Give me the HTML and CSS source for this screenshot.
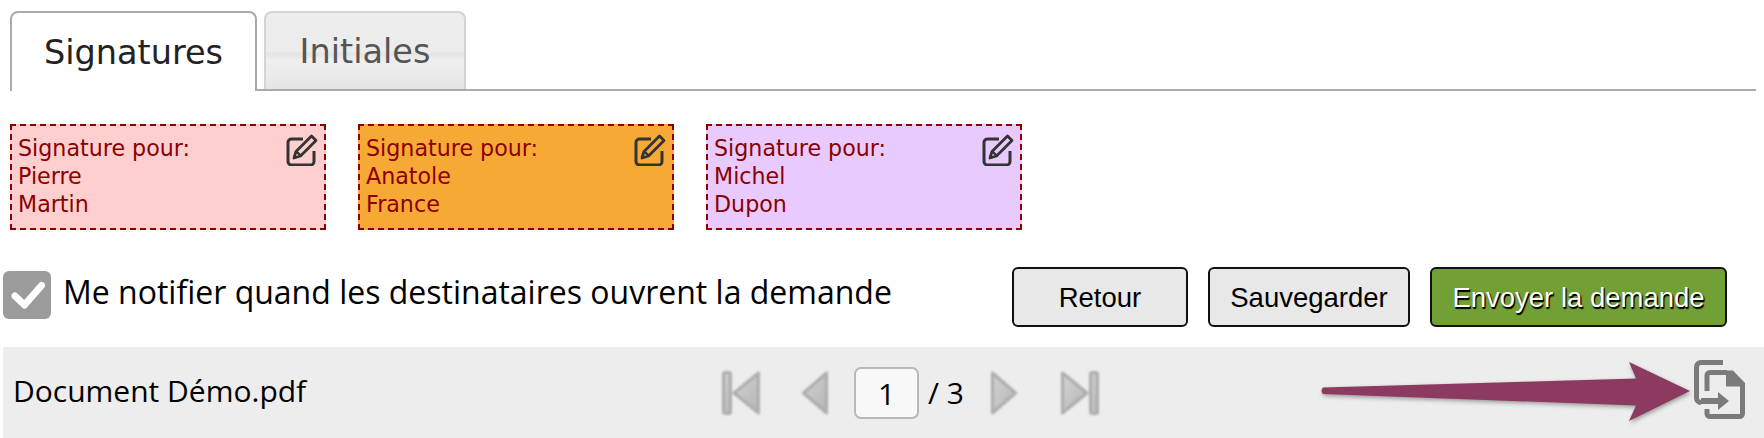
FILE: index.html
```html
<!DOCTYPE html>
<html lang="fr">
<head>
<meta charset="utf-8">
<title>Signatures</title>
<link rel="stylesheet" href="styles.css">
</head>
<body>
<svg class="defs" width="0" height="0" aria-hidden="true">
  <defs>
    <linearGradient id="navfill" x1="0" y1="0" x2="1" y2="1">
      <stop offset="0" stop-color="#d4d4d4"/>
      <stop offset="1" stop-color="#b4b4b4"/>
    </linearGradient>
    <symbol id="edit" viewBox="0 0 32 32">
      <path d="M17 5H5.500A3.500 3.500 0 0 0 2 8.500v19A3.500 3.500 0 0 0 5.500 31h19a3.500 3.500 0 0 0 3.500-3.500V17" fill="none" stroke="currentColor" stroke-width="3"/>
      <path d="M25.500 2 30 6.500 14.500 22 8 24l2-6.500z" fill="none" stroke="currentColor" stroke-width="2.800" stroke-linejoin="round"/>
      <path d="M11 18l4 4" stroke="currentColor" stroke-width="2.400"/>
    </symbol>
  </defs>
</svg>
<main class="page">
  <nav class="tabs">
    <a class="tab tab-active">Signatures</a>
    <a class="tab tab-idle">Initiales</a>
  </nav>

  <section class="cards">
    <article class="card card-pink">
      <p class="card-text">Signature pour:<br>Pierre<br>Martin</p>
      <svg class="edit-icon"><use href="#edit"/></svg>
    </article>
    <article class="card card-orange">
      <p class="card-text">Signature pour:<br>Anatole<br>France</p>
      <svg class="edit-icon"><use href="#edit"/></svg>
    </article>
    <article class="card card-violet">
      <p class="card-text">Signature pour:<br>Michel<br>Dupon</p>
      <svg class="edit-icon"><use href="#edit"/></svg>
    </article>
  </section>

  <section class="actions">
    <label class="notify">
      <svg class="check" viewBox="0 0 48 48" aria-hidden="true">
        <rect width="48" height="48" rx="6" fill="#9b9b9b"/>
        <path d="M12 25l9.500 9L38.500 14.500" fill="none" stroke="#fff" stroke-width="7" stroke-linecap="round" stroke-linejoin="round"/>
      </svg>
      <span>Me notifier quand les destinataires ouvrent la demande</span>
    </label>
    <div class="buttons">
      <button class="btn btn-back">Retour</button>
      <button class="btn btn-save">Sauvegarder</button>
      <button class="btn btn-send">Envoyer la demande</button>
    </div>
  </section>

  <section class="toolbar">
    <div class="filename">Document Démo.pdf</div>
    <div class="pager">
      <svg class="nav nav-first" viewBox="0 0 38 44" aria-hidden="true">
        <rect x="1.500" y="1.500" width="7" height="41" rx="2"/>
        <path d="M36.500 2V42L12 22z"/>
      </svg>
      <svg class="nav nav-prev" viewBox="0 0 26 44" aria-hidden="true">
        <path d="M24.500 2V42L1.500 22z"/>
      </svg>
      <div class="page-input">1</div>
      <span class="page-total">/ 3</span>
      <svg class="nav nav-next" viewBox="0 0 26 44" aria-hidden="true">
        <path d="M1.500 2V42L24.500 22z"/>
      </svg>
      <svg class="nav nav-last" viewBox="0 0 38 44" aria-hidden="true">
        <path d="M1.500 2V42L26 22z"/>
        <rect x="29.500" y="1.500" width="7" height="41" rx="2"/>
      </svg>
    </div>
    <svg class="copy" viewBox="0 0 51 59" aria-hidden="true">
      <path d="M29 2.500H7A4.500 4.500 0 0 0 2.500 7v31A4.500 4.500 0 0 0 7 42.500" fill="none" stroke="#7b7b7b" stroke-width="5"/>
      <path d="M13 31V15.500a3 3 0 0 1 3-3H33M48.500 25V53.500a3 3 0 0 1-3 3H16a3 3 0 0 1-3-3V49" fill="none" stroke="#7b7b7b" stroke-width="5"/>
      <path d="M32 10.500h7L51 23v3.500H32z" fill="#7b7b7b"/>
      <path d="M7 38h17v-6l11 9-11 9v-6H7z" fill="#7b7b7b"/>
    </svg>
    <svg class="pointer" viewBox="0 0 372 62" aria-hidden="true">
      <path d="M3 26.500 316 17.500 309 1 370 30 309 60 316 44.500 3 33Q0 29.500 3 26.500z" fill="#8c3a5f"/>
    </svg>
  </section>
</main>
</body>
</html>
```
FILE: styles.css
```css
* { box-sizing: border-box; }

html, body {
  margin: 0;
  background: #fff;
}

.defs { position: absolute; }

.page {
  width: 1764px;
  height: 438px;
  overflow: hidden;
}

/* Tabs */
.tabs {
  display: flex;
  gap: 7px;
  align-items: flex-end;
  height: 91px;
  margin: 0 8px 0 10px;
  padding-top: 11px;
  border-bottom: 2px solid #aaa;
}

.tab {
  display: flex;
  align-items: center;
  justify-content: center;
  height: 80px;
  border: 2px solid #aaa;
  border-bottom: 0;
  border-radius: 8px 8px 0 0;
  font-family: "DejaVu Sans", sans-serif;
  font-size: 33.500px;
}

.tab-active {
  width: 247px;
  margin-bottom: -2px;
  background: #fff;
  color: #222;
}

.tab-idle {
  width: 202px;
  height: 78px;
  border-color: #d4d4d4;
  background: linear-gradient(#ededed 0, #ececec 50%, #e4e4e4 54%, #efefef 62%, #ececec 80%, #e4e4e4 100%);
  color: #555;
}

/* Signature cards */
.cards {
  display: flex;
  gap: 32px;
  margin: 33px 0 0 10px;
}

.card {
  display: flex;
  justify-content: space-between;
  width: 316px;
  height: 106px;
  padding: 8px 6px 0 6px;
  border: 2px dashed #8b0000;
  color: #8b0000;
  font-family: "DejaVu Sans", sans-serif;
  font-size: 22.200px;
  line-height: 28px;
}

.card-text { margin: 0; }
.card-pink { background: #ffcfcf; }
.card-orange { background: #f7a935; }
.card-violet { background: #e8caff; }

.edit-icon {
  width: 32px;
  height: 32px;
  color: #333;
  filter: blur(.6px);
}

/* Notification row */
.actions {
  display: flex;
  justify-content: space-between;
  align-items: flex-start;
  height: 80px;
  margin-top: 37px;
  padding: 0 37px 0 3px;
}

.notify {
  display: flex;
  align-items: center;
  gap: 12px;
  margin-top: 4px;
  color: #000;
  font-family: "Open Sans", sans-serif;
  font-size: 32px;
}

.notify span { position: relative; top: -4px; }

.check { width: 48px; height: 48px; }

.buttons {
  display: flex;
  gap: 20px;
}

.btn {
  height: 60px;
  padding: 2px 0 0;
  border: 2px solid #111;
  border-radius: 6px;
  background: #e8e8e8;
  color: #000;
  font-family: "Liberation Sans", sans-serif;
  font-size: 27.500px;
}

.btn-back { width: 176px; }
.btn-save { width: 202px; }

.btn-send {
  width: 297px;
  background: #72a034;
  color: #fff;
  text-shadow: 1px 1px 1px #000, 1px 2px 1px #000;
}

/* Viewer toolbar */
.toolbar {
  position: relative;
  display: flex;
  align-items: center;
  height: 91px;
  margin-left: 3px;
  padding-left: 10px;
  background: #ededed;
}

.filename {
  width: 709px;
  margin-top: -4px;
  color: #000;
  font-family: "Open Sans", sans-serif;
  font-size: 30px;
}

.pager {
  display: flex;
  align-items: center;
}

.nav {
  height: 44px;
  flex: none;
  fill: url(#navfill);
  stroke: #adadad;
  stroke-width: 3;
  stroke-linejoin: round;
  filter: blur(.8px);
}

.nav-first { width: 38px; margin-right: 42px; }
.nav-prev { width: 26px; margin-right: 26px; }
.nav-next { width: 26px; margin: 0 44px 0 27px; }
.nav-last { width: 38px; }

.page-input {
  width: 65px;
  height: 52px;
  border: 2px solid #b8b8b8;
  border-radius: 7px;
  background: #f8f8f8;
  color: #000;
  font-family: "Open Sans", sans-serif;
  font-size: 30px;
  line-height: 50px;
  text-align: center;
}

.page-total {
  margin-left: 9px;
  color: #000;
  font-family: "Open Sans", sans-serif;
  font-size: 30px;
}

.copy {
  width: 51px;
  height: 59px;
  margin-left: auto;
  margin-right: 19px;
  margin-top: -7px;
}

.pointer {
  position: absolute;
  left: 1317px;
  top: 14px;
  width: 372px;
  height: 62px;
  filter: drop-shadow(1px 2px 2px rgba(0,0,0,.35));
}
```
